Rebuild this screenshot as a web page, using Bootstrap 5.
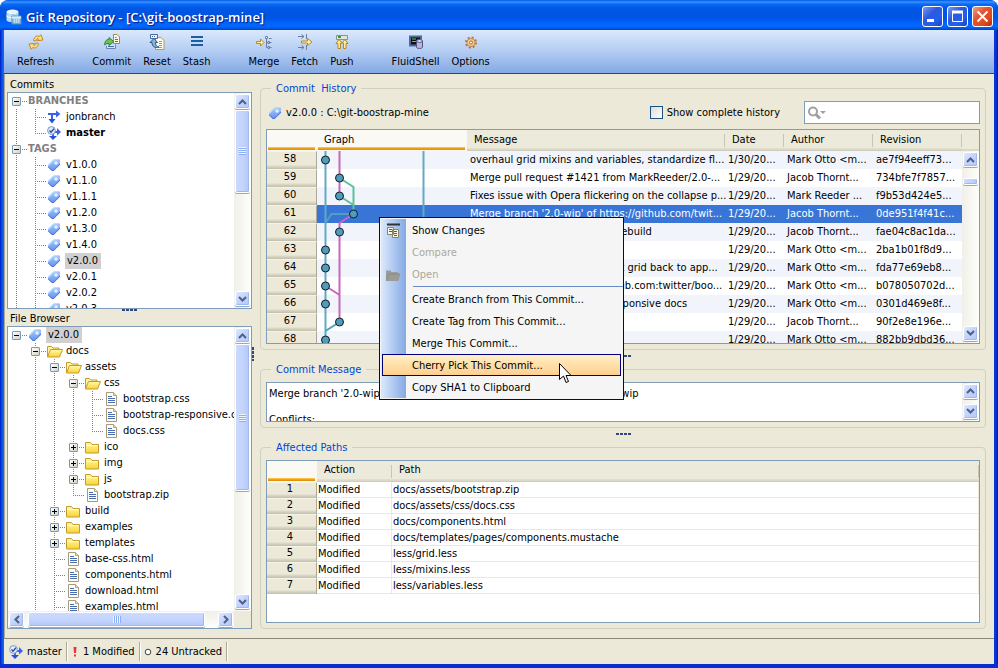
<!DOCTYPE html>
<html lang="en">
<head>
<meta charset="utf-8">
<meta name="viewport" content="width=device-width, initial-scale=1">
<title>Git Repository - [C:\git-boostrap-mine]</title>
<link href="https://cdn.jsdelivr.net/npm/bootstrap@5.3.0/dist/css/bootstrap.min.css" rel="stylesheet">
<style>
:root { --face: #ece9d8; --line: #7f9db9; --navy: #000080; }
body { font: 11px/16px "DejaVu Sans Condensed", "Noto Sans", sans-serif; color: #000; background: #fff; }
button { font: inherit; color: inherit; }
svg { flex: none; display: block; }
.app-window { height: 100vh; border-radius: 8px 8px 0 0; background: linear-gradient(90deg, #0019cf, #0855dd 2px, #166aee 4px, #0831d9 calc(100% - 4px), #0a3be4 calc(100% - 3px), #001ea0); padding: 0 4px 4px; box-shadow: inset 0 -4px 0 #0a2fd0; }
.title-bar { height: 30px; margin: 0 -4px; padding: 3px 5px 0 6px; border-radius: 8px 8px 0 0; background: linear-gradient(#0058e6 0, #3a93ff 2px, #0a6bf5 4px, #0058e6 8px, #0054e3 14px, #0055e5 18px, #0066ff 24px, #0066fb 27px, #0042c9 30px); }
.title-text { font: 600 13px/16px "Open Sans", "Noto Sans", sans-serif; color: #fff; text-shadow: 1px 1px 1px #0a1883; }
.win-btn { width: 21px; height: 21px; padding: 0; border: 1px solid #fff; border-radius: 3px; background: linear-gradient(135deg, #7b9bf0, #2b58de 40%, #2360ea 70%, #1941c5); }
.win-close { background: linear-gradient(135deg, #f0a088, #e2532f 40%, #e04a20 70%, #b82e0c); }
.tool-bar { height: 44px; padding: 0 7px; background: linear-gradient(#dbe9fd, #b7cff4 45%, #84a9e4); border-bottom: 1px solid #39399c; box-shadow: 0 1px 0 #aca899; gap: 26px; }
.tool-btn { padding: 4px 6px 0; border: 0; background: none; }
.tool-btn svg { margin: 0 auto 4px; }
.work-area { background: var(--face); border-left: 1px solid #aca899; border-bottom: 1px solid #8a8778; padding: 4px 8px 9px 2px; }
.side-col { width: 245px; flex: none; }
.pane-label { line-height: 14px; padding-left: 3px; }
.pane { background: #fff; border: 1px solid var(--line); min-height: 0; }
.grow-commits { flex: 217 1 0; }
.grow-files { flex: 303 1 0; }
.main-col { padding-top: 3px; }
.grow-history { flex: 263 1 0; }
.grow-message { flex: 59 1 0; }
.grow-paths { flex: 183 1 0; }
.split-h { height: 3px; flex: none; }
.split-wide { height: 12px; }
.split-v { width: 8px; flex: none; }
.grip-h { width: 15px; height: 2px; background: repeating-linear-gradient(90deg, #33477c 0 3px, transparent 3px 4px); }
.grip-v { width: 2px; height: 14px; background: repeating-linear-gradient(#33477c 0 3px, transparent 3px 4px); }

.tree { list-style: none; margin: 0; padding: 0; overflow: hidden; flex: 1 1 0; min-width: 0; white-space: nowrap; }
.tree li { display: flex; align-items: center; height: 16px; line-height: 14px; }
.gd { width: 19px; height: 16px; flex: none; display: flex; padding-left: 4px; align-items: center; }
.gd-v, .gd-t { background: repeating-linear-gradient(#808080 0 1px, transparent 1px 2px) 8px 0 / 1px 16px no-repeat; }
.gd-t { background: repeating-linear-gradient(#808080 0 1px, transparent 1px 2px) 8px 0 / 1px 16px no-repeat, repeating-linear-gradient(90deg, #808080 0 1px, transparent 1px 2px) 8px 8px / 11px 1px no-repeat; }
.gd-l { background: repeating-linear-gradient(#808080 0 1px, transparent 1px 2px) 8px 0 / 1px 9px no-repeat, repeating-linear-gradient(90deg, #808080 0 1px, transparent 1px 2px) 8px 8px / 11px 1px no-repeat; }
.gd-r { background: repeating-linear-gradient(90deg, #808080 0 1px, transparent 1px 2px) 8px 8px / 11px 1px no-repeat; }
.twist { width: 9px; height: 9px; padding: 0; border: 1px solid #7898b5; border-radius: 1px; background: linear-gradient(#000, #000) 1px 3px / 5px 1px no-repeat, linear-gradient(135deg, #fff, #d4d0c0); }
.twist-plus { background: linear-gradient(#000, #000) 1px 3px / 5px 1px no-repeat, linear-gradient(#000, #000) 3px 1px / 1px 5px no-repeat, linear-gradient(135deg, #fff, #d4d0c0); }
.ico-slot { width: 20px; flex: none; padding-left: 1px; }
.ico-slot .doc { margin-left: 2px; }
.tree-head { color: #808080; font-weight: bold; padding-left: 1px; }
.picked { background: #d0d0d0; line-height: 16px; padding: 0 3px 0 2px; margin-left: -1px; }

.sb { background: linear-gradient(90deg, #f0efe8, #fefefb); width: 17px; flex: none; padding: 1px 0 1px 1px; }
.sb-h { background: linear-gradient(#f0efe8, #fefefb); width: auto; height: 17px; flex: none; padding: 1px; }
.sb-btn, .sb-thumb { width: 15px; height: 15px; padding: 0; flex: none; border: 1px solid #fff; border-radius: 2px; box-shadow: inset -1px -1px 0 #a0b8ea, 0 1px 0 #8aa8dc; background: linear-gradient(135deg, #dfe8fe, #c3d3fd 50%, #b4c8f8); display: flex; align-items: center; justify-content: center; margin-bottom: 1px; }
.sb-thumb { background: linear-gradient(90deg, #cbdafe, #c1d2fd 60%, #b4c6f6); height: auto; }
.sb-h .sb-thumb { width: auto; height: 15px; background: linear-gradient(#cbdafe, #c1d2fd 60%, #b4c6f6); }
.sb-ridge { width: 7px; height: 8px; background: repeating-linear-gradient(#eef4fe 0 1px, #8cb0f8 1px 2px); }
.sb-h .sb-ridge { width: 8px; height: 7px; background: repeating-linear-gradient(90deg, #eef4fe 0 1px, #8cb0f8 1px 2px); }
.thumb-commits { flex: 78 1 0; } .rest-commits { flex: 94 1 0; }
.thumb-files { flex: 140 1 0; } .rest-files { flex: 98 1 0; }
.thumb-wide { flex: 178 1 0; } .rest-wide { flex: 9 1 0; }
.lead-history { flex: 10 1 0; } .rest-history { flex: 140 1 0; }
.thumb-history { height: 7px; }

.group-box { border: 1px solid #d0d0bf; border-radius: 4px; padding: 0 5px 5px; min-width: 0; min-height: 0; margin: 0; }
.group-box > legend { float: none; width: auto; margin: 0 0 0 5px; padding: 0 5px; font-size: 11px; line-height: 15px; color: #0046d5; }
.box-gap { margin-top: 5px; }
.history-bar { height: 23px; margin: 5px 0; flex: none; }
.repo-tag { margin: 0 4px 0 2px; }
.full-check { appearance: none; width: 13px; height: 13px; margin: 0; border: 1px solid #1c5180; background: linear-gradient(135deg, #dcdcd7, #fff); }
.find-box { width: 176px; border: 1px solid var(--line); background: #fff; padding: 0 3px; }
.find-box input { border: 0; outline: 0; min-width: 0; flex: 1; }

.grid { table-layout: fixed; width: 100%; border-collapse: separate; border-spacing: 0; }
.grid th, .grid td { padding: 0 0 0 3px; white-space: nowrap; }
.grid thead th { height: 21px; font-weight: normal; padding: 0 0 2px 7px; background: linear-gradient(#c9c5b2, #c9c5b2) right 4px / 1px 13px no-repeat, linear-gradient(#ebeadb 0 18px, #e2decd 18px 19px, #cbc7b8 21px); }
.grid thead .hot { background: linear-gradient(#ffcf5a, #f0a010 50%, #d88a0c) 1px 17px / calc(100% - 3px) 3px no-repeat, #faf9f4; }
.grid tbody th { font-weight: normal; text-align: center; padding: 0 3px 3px 0; background: linear-gradient(var(--face) 0 13px, #dedac8 14px, #c2beac 100%); border-right: 1px solid #aca899; border-top: 1px solid #f6f4ea; }
.hist td, .hist tbody th { height: 18px; line-height: 14px; }
.hist tr:nth-child(odd) td { background: #f1f5fb; }
.hist tr.active-row td { background: #3875d7; color: #fff; }
.hist thead th { line-height: 18px; }
.paths td, .paths tbody th { height: 16px; line-height: 12px; }
.paths tbody th { background: linear-gradient(var(--face) 0 11px, #dedac8 12px, #c2beac 100%); }
.paths td { border-bottom: 1px solid #ece9d8; border-right: 1px solid #ece9d8; padding-left: 1px; line-height: 15px; }
.w-num { width: 50px; } .w-graph { width: 150px; } .w-date { width: 59px; } .w-person { width: 89px; } .w-act { width: 75px; }
.graph-layer { left: 50px; top: 21px; pointer-events: none; }
.sb-cap { height: 21px; background: linear-gradient(#ebeadb 0 19px, #dcd8c8 19px); flex: none; }
.msg-text { border: 0; outline: 0; resize: none; overflow: hidden; padding: 4px 2px 0; line-height: 13px; min-width: 0; flex: 1; }

.status-bar { height: 25px; background: var(--face); padding: 0 5px; flex: none; }
.status-cell { border-right: 1px solid #aca899; box-shadow: 1px 0 0 #fff; height: 19px; padding: 0 4px; }

.ctx-menu { left: 379px; top: 217px; width: 245px; border: 1px solid var(--navy); background: linear-gradient(90deg, #dbe9fd, #84a9e4) 1px 1px / 25px calc(100% - 2px) no-repeat, #f5f5f5; padding: 1px 2px; z-index: 5; }
.ctx-menu button { display: flex; align-items: center; width: 100%; height: 22px; padding: 2px 0 0; border: 1px solid transparent; background: none; }
.ctx-menu button:disabled { color: #aca899; }
.ctx-menu .ctx-hot { border-color: var(--navy); background: linear-gradient(#fff0c8, #ffcf8c); }
.ctx-ico { width: 29px; flex: none; padding-left: 2px; }
.ctx-line { height: 1px; margin: 1px -2px 1px 31px; background: #6a8ccb; }
.pointer { left: 559px; top: 363px; z-index: 6; pointer-events: none; }
</style>
<script src="https://cdn.jsdelivr.net/npm/bootstrap@5.3.0/dist/js/bootstrap.bundle.min.js" defer></script>
</head>
<body>
<svg width="0" height="0" class="position-absolute" aria-hidden="true">
  <defs>
    <linearGradient id="gFold" x1="0" y1="0" x2="0" y2="1"><stop offset="0" stop-color="#fffab0"/><stop offset="1" stop-color="#f8d230"/></linearGradient>
    <linearGradient id="gTag" x1="0" y1="0" x2="0" y2="1"><stop offset="0" stop-color="#a8ccff"/><stop offset="1" stop-color="#6590f0"/></linearGradient>
  </defs>
  <symbol id="i-tag" viewBox="0 0 14 14"><path d="M1 7 6.500 1.500 12 1 13 2v4.500L6.500 13H5L1 9z" fill="url(#gTag)"/><path d="M1 7 6.500 1.500 12 1 12.500 1.500 7 2.500 1.500 8z" fill="#b9e0ff"/><path d="M1 8.500 5 12h1.500L13 5.500v1.200L6.500 13H5L1 9.300z" fill="#4a72d8"/><path d="M9 3v4M7 5h4" stroke="#fff"/></symbol>
  <symbol id="i-branch" viewBox="0 0 14 14"><path d="M1 4h9M5 4v6" stroke="#3a62e8" stroke-width="2" fill="none"/><path d="M9 .5 13.500 4 9 7.500z" fill="#3a62e8"/><path d="M1.500 9h7L5 13.500z" fill="#2850e0"/></symbol>
  <symbol id="i-head" viewBox="0 0 14 14"><path d="M8 6h3M6 7v4" stroke="#3a62e8" stroke-width="2"/><path d="M10 2 14 6 10 9.500z" fill="#3a62e8"/><path d="M2 10h8l-4 4z" fill="#2850e0"/><circle cx="4.500" cy="4.500" r="3.900" fill="#dfe9fb" stroke="#7a98cf"/><path d="M2.500 4.500 4 6.200 7 2.800" stroke="#284a9a" stroke-width="1.300" fill="none"/></symbol>
  <symbol id="i-open" viewBox="0 0 16 13"><path d="M.5 11.500V1.500h4l1.500 1.500h6v2.500" fill="#fff6a0" stroke="#c79a2c"/><path d="M.5 12 3.500 4.500H15.500L12.500 12z" fill="url(#gFold)" stroke="#c79a2c"/></symbol>
  <symbol id="i-fold" viewBox="0 0 16 13"><path d="M.5 11.500v-10h5l1.500 2h6.500v8.500H.5z" fill="url(#gFold)" stroke="#c79a2c"/><path d="M1.500 4.500h11" stroke="#fffde0"/></symbol>
  <symbol id="i-doc" viewBox="0 0 12 14"><path d="M.5.5h7l3 3v10H.5z" fill="#fdfdf4" stroke="#a89a78"/><path d="M7.500.5v3h3" fill="#e6dcae" stroke="#b8a870"/><path d="M2 4.500h4M2 6.500h7M2 8.500h7M2 10.500h7" stroke="#4a6db0"/></symbol>
  <symbol id="c-up" viewBox="0 0 9 6"><path d="M1 5 4.500 1.500 8 5" fill="none" stroke="#4d6185" stroke-width="2"/></symbol>
  <symbol id="c-down" viewBox="0 0 9 6"><path d="M1 1 4.500 4.500 8 1" fill="none" stroke="#4d6185" stroke-width="2"/></symbol>
  <symbol id="c-left" viewBox="0 0 6 9"><path d="M5 1 1.500 4.500 5 8" fill="none" stroke="#4d6185" stroke-width="2"/></symbol>
  <symbol id="c-right" viewBox="0 0 6 9"><path d="M1 1 4.500 4.500 1 8" fill="none" stroke="#4d6185" stroke-width="2"/></symbol>
</svg>

<div class="app-window d-flex flex-column overflow-hidden position-relative">
  <header class="title-bar d-flex align-items-center">
    <svg width="16" height="16" viewBox="0 0 16 16"><ellipse cx="6.500" cy="3" rx="6" ry="2.500" fill="#e6f4fb"/><path d="M.5 3v8c0 3 12 3 12 0V3c0 3-12 3-12 0z" fill="#b9def0"/><path d="M.5 7c2 2 6 2 8 1" stroke="#fff" fill="none"/><path d="M6 7h9v8H6z" fill="#8fc4e0" stroke="#4f8fc0"/><path d="M6 8.500h9" stroke="#d9effa" stroke-width="2"/><path d="M8 11h6M8 13h6" stroke="#e8f6fc" stroke-dasharray="1 1"/></svg>
    <h1 class="title-text m-0 ms-1 flex-grow-1">Git Repository - [C:\git-boostrap-mine]</h1>
    <div class="d-flex gap-1">
      <button class="win-btn" aria-label="Minimize"><svg width="19" height="19"><path d="M4 13.500h7" stroke="#fff" stroke-width="3"/></svg></button>
      <button class="win-btn" aria-label="Maximize"><svg width="19" height="19"><path d="M4.500 5v9.500h10V5" stroke="#fff" fill="none"/><path d="M4 5h11" stroke="#fff" stroke-width="3"/></svg></button>
      <button class="win-btn win-close" aria-label="Close"><svg width="19" height="19"><path d="m4.500 4.500 10 10m0-10-10 10" stroke="#fff" stroke-width="2"/></svg></button>
    </div>
  </header>

  <nav class="tool-bar d-flex flex-shrink-0 align-items-start" aria-label="Tools">
    <div class="d-flex">
      <button class="tool-btn"><svg width="16" height="16" viewBox="0 0 16 16"><path d="M5.500 6.500C6 3 8.500 1 11 2.500L13 .8l2 5.200-5.500.7 1-1.700C9.500 4 8.500 4.500 8 7z" fill="#ffdc80" stroke="#c08a2a"/><path d="M10.500 9.500C10 13 7.500 15 5 13.500L3 15.200 1 10l5.500-.7-1 1.700C6.500 12 7.500 11.500 8 9z" fill="#ffdc80" stroke="#c08a2a"/></svg>Refresh</button>
    </div>
    <div class="d-flex">
      <button class="tool-btn"><svg width="16" height="16" viewBox="0 0 16 16"><path d="M9.500.5h3.500l2.500 2.500v6.500h-6z" fill="#fdfbe8" stroke="#a08a4a"/><path d="M11 3.500h1.500M11 5.500h3M11 7.500h3" stroke="#4a6db0"/><path d="M2.500 12v2.500h9V10.500" fill="#d8e4f6" stroke="#6a86b4"/><path d="M4 12.500h6" stroke="#4a6db0"/><path d="M.8 11C.6 7 2.500 5.500 5 5.500V3.500L9.500 7.500 5 11.500V9.500C3.500 9.200 2 9.500.8 11z" fill="#6cc458" stroke="#2f7f2c"/></svg>Commit</button>
      <button class="tool-btn"><svg width="16" height="16" viewBox="0 0 16 16"><path d="M6.500 3.500h5.500l3 3v9h-8.500z" fill="#fdfbe8" stroke="#b09a58"/><path d="M10 7.500h3M10 9.500h3M10 11.500h3M9 13.500h4" stroke="#8a9cc0"/><path d="M1.500.500h7v4h-7z" fill="#eef4fc" stroke="#4a6a9a"/><path d="M3 2.500h4" stroke="#3a62a0" stroke-dasharray="1 1"/><path d="M5 4.500 8.500 8.500H6.500c-.2 3 1.500 4 3.500 4.500-4 1.500-7-.5-7-4.500H1z" fill="#8ab4d6" stroke="#2c5a8a"/></svg>Reset</button>
      <button class="tool-btn"><svg width="16" height="16" viewBox="0 0 16 16"><path d="M2 3h12M2 7h12M2 11h12" stroke="#1c5f9f" stroke-width="2"/></svg>Stash</button>
    </div>
    <div class="d-flex">
      <button class="tool-btn"><svg width="16" height="16" viewBox="0 0 16 16"><path d="M.5 7.500h4V5L8 8.500 4.500 12V9.500h-4z" fill="#fff0a0" stroke="#b88a20"/><path d="M10.500 4v9.500h2M10.500 8.500h2M13 4.500h2.500M13.500 8.500h2M13.500 13.500h2" stroke="#6880a8" fill="none"/><path d="M9.500 2.500h2v2h-2zM12 7.500h1.500v2H12zM12 12.500h1.500v2H12z" fill="#fff" stroke="#6880a8"/></svg>Merge</button>
      <button class="tool-btn"><svg width="16" height="16" viewBox="0 0 16 16"><path d="M1 2.500h6M4.500.5l2.500 2-2.500 2M9.500 0v5M1 13.500h6M4.500 11.500l2.500 2-2.500 2M9.500 11v5" stroke="#6a7c98" fill="none"/><path d="M4.500 7h6V4.500L15 8l-4.500 3.500V9h-6z" fill="#fff0a0" stroke="#b88a20"/></svg>Fetch</button>
      <button class="tool-btn"><svg width="16" height="16" viewBox="0 0 16 16"><path d="M2.500 1.500h11v4h-11z" fill="#dfe6dc" stroke="#8a9484"/><path d="M4 3h3" stroke="#3a9a3a" stroke-width="2"/><path d="M4 14.500V9.500H2L5 5.500 8 9H6.500v5.500zM9.500 14.500V9H8l3-3.500 3 4h-2v5z" fill="#fff0a0" stroke="#b8861c"/></svg>Push</button>
    </div>
    <div class="d-flex">
      <button class="tool-btn"><svg width="16" height="16" viewBox="0 0 16 16"><path d="M2 2.500h11v9H2z" fill="#111" stroke="#4a6a9c" stroke-width="2"/><path d="M4 5h4M4 7.500h5" stroke="#58d058"/><path d="M8.500 7v6c0 2 6 2 6 0V7z" fill="#b4b8dc" stroke="#50547c"/><ellipse cx="11.500" cy="7" rx="3" ry="1.400" fill="#e6e8f6" stroke="#50547c"/></svg>FluidShell</button>
      <button class="tool-btn"><svg width="16" height="16" viewBox="0 0 16 16"><circle cx="8" cy="8.500" r="5" fill="none" stroke="#b4783c" stroke-width="2" stroke-dasharray="2 1.930"/><circle cx="8" cy="8.500" r="4" fill="#f4cc90" stroke="#c08a50"/><circle cx="8" cy="8.500" r="1.500" fill="#fff" stroke="#a06830"/></svg>Options</button>
    </div>
  </nav>

  <main class="work-area d-flex flex-grow-1 overflow-hidden">
    <div class="side-col d-flex flex-column">
      <div class="pane-label">Commits</div>
      <div class="pane grow-commits d-flex">
        <ul class="tree">
          <li><span class="gd gd-r"><button class="twist" aria-label="Collapse"></button></span><span class="tree-head">BRANCHES</span></li>
          <li><span class="gd gd-v"></span><span class="gd gd-t"></span><span class="ico-slot"><svg width="14" height="14"><use href="#i-branch"/></svg></span>jonbranch</li>
          <li><span class="gd gd-v"></span><span class="gd gd-l"></span><span class="ico-slot"><svg width="14" height="14"><use href="#i-head"/></svg></span><b>master</b></li>
          <li><span class="gd gd-t"><button class="twist" aria-label="Collapse"></button></span><span class="tree-head">TAGS</span></li>
          <li><span class="gd gd-v"></span><span class="gd gd-t"></span><span class="ico-slot"><svg width="14" height="14"><use href="#i-tag"/></svg></span>v1.0.0</li>
          <li><span class="gd gd-v"></span><span class="gd gd-t"></span><span class="ico-slot"><svg width="14" height="14"><use href="#i-tag"/></svg></span>v1.1.0</li>
          <li><span class="gd gd-v"></span><span class="gd gd-t"></span><span class="ico-slot"><svg width="14" height="14"><use href="#i-tag"/></svg></span>v1.1.1</li>
          <li><span class="gd gd-v"></span><span class="gd gd-t"></span><span class="ico-slot"><svg width="14" height="14"><use href="#i-tag"/></svg></span>v1.2.0</li>
          <li><span class="gd gd-v"></span><span class="gd gd-t"></span><span class="ico-slot"><svg width="14" height="14"><use href="#i-tag"/></svg></span>v1.3.0</li>
          <li><span class="gd gd-v"></span><span class="gd gd-t"></span><span class="ico-slot"><svg width="14" height="14"><use href="#i-tag"/></svg></span>v1.4.0</li>
          <li><span class="gd gd-v"></span><span class="gd gd-t"></span><span class="ico-slot"><svg width="14" height="14"><use href="#i-tag"/></svg></span><span class="picked">v2.0.0</span></li>
          <li><span class="gd gd-v"></span><span class="gd gd-t"></span><span class="ico-slot"><svg width="14" height="14"><use href="#i-tag"/></svg></span>v2.0.1</li>
          <li><span class="gd gd-v"></span><span class="gd gd-t"></span><span class="ico-slot"><svg width="14" height="14"><use href="#i-tag"/></svg></span>v2.0.2</li>
          <li><span class="gd gd-v"></span><span class="gd gd-t"></span><span class="ico-slot"><svg width="14" height="14"><use href="#i-tag"/></svg></span>v2.0.3</li>
        </ul>
        <div class="sb d-flex flex-column">
          <button class="sb-btn" aria-label="Scroll up"><svg width="9" height="6"><use href="#c-up"/></svg></button>
          <div class="sb-thumb thumb-commits"><span class="sb-ridge"></span></div>
          <div class="rest-commits"></div>
          <button class="sb-btn" aria-label="Scroll down"><svg width="9" height="6"><use href="#c-down"/></svg></button>
        </div>
      </div>
      <div class="split-h d-flex justify-content-center"><span class="grip-h"></span></div>
      <div class="pane-label">File Browser</div>
      <div class="pane grow-files d-flex flex-column">
        <div class="d-flex flex-grow-1 overflow-hidden">
          <ul class="tree">
            <li><span class="gd gd-r"><button class="twist" aria-label="Collapse"></button></span><span class="ico-slot"><svg width="14" height="14"><use href="#i-tag"/></svg></span><span class="picked">v2.0.0</span></li>
            <li><span class="gd"></span><span class="gd gd-t"><button class="twist" aria-label="Collapse"></button></span><span class="ico-slot"><svg width="16" height="13"><use href="#i-open"/></svg></span>docs</li>
            <li><span class="gd"></span><span class="gd gd-v"></span><span class="gd gd-t"><button class="twist" aria-label="Collapse"></button></span><span class="ico-slot"><svg width="16" height="13"><use href="#i-open"/></svg></span>assets</li>
            <li><span class="gd"></span><span class="gd gd-v"></span><span class="gd gd-v"></span><span class="gd gd-t"><button class="twist" aria-label="Collapse"></button></span><span class="ico-slot"><svg width="16" height="13"><use href="#i-open"/></svg></span>css</li>
            <li><span class="gd"></span><span class="gd gd-v"></span><span class="gd gd-v"></span><span class="gd gd-v"></span><span class="gd gd-t"></span><span class="ico-slot"><svg class="doc" width="12" height="14"><use href="#i-doc"/></svg></span>bootstrap.css</li>
            <li><span class="gd"></span><span class="gd gd-v"></span><span class="gd gd-v"></span><span class="gd gd-v"></span><span class="gd gd-t"></span><span class="ico-slot"><svg class="doc" width="12" height="14"><use href="#i-doc"/></svg></span>bootstrap-responsive.css</li>
            <li><span class="gd"></span><span class="gd gd-v"></span><span class="gd gd-v"></span><span class="gd gd-v"></span><span class="gd gd-l"></span><span class="ico-slot"><svg class="doc" width="12" height="14"><use href="#i-doc"/></svg></span>docs.css</li>
            <li><span class="gd"></span><span class="gd gd-v"></span><span class="gd gd-v"></span><span class="gd gd-t"><button class="twist twist-plus" aria-label="Expand"></button></span><span class="ico-slot"><svg width="16" height="13"><use href="#i-fold"/></svg></span>ico</li>
            <li><span class="gd"></span><span class="gd gd-v"></span><span class="gd gd-v"></span><span class="gd gd-t"><button class="twist twist-plus" aria-label="Expand"></button></span><span class="ico-slot"><svg width="16" height="13"><use href="#i-fold"/></svg></span>img</li>
            <li><span class="gd"></span><span class="gd gd-v"></span><span class="gd gd-v"></span><span class="gd gd-t"><button class="twist twist-plus" aria-label="Expand"></button></span><span class="ico-slot"><svg width="16" height="13"><use href="#i-fold"/></svg></span>js</li>
            <li><span class="gd"></span><span class="gd gd-v"></span><span class="gd gd-v"></span><span class="gd gd-l"></span><span class="ico-slot"><svg class="doc" width="12" height="14"><use href="#i-doc"/></svg></span>bootstrap.zip</li>
            <li><span class="gd"></span><span class="gd gd-v"></span><span class="gd gd-t"><button class="twist twist-plus" aria-label="Expand"></button></span><span class="ico-slot"><svg width="16" height="13"><use href="#i-fold"/></svg></span>build</li>
            <li><span class="gd"></span><span class="gd gd-v"></span><span class="gd gd-t"><button class="twist twist-plus" aria-label="Expand"></button></span><span class="ico-slot"><svg width="16" height="13"><use href="#i-fold"/></svg></span>examples</li>
            <li><span class="gd"></span><span class="gd gd-v"></span><span class="gd gd-t"><button class="twist twist-plus" aria-label="Expand"></button></span><span class="ico-slot"><svg width="16" height="13"><use href="#i-fold"/></svg></span>templates</li>
            <li><span class="gd"></span><span class="gd gd-v"></span><span class="gd gd-t"></span><span class="ico-slot"><svg class="doc" width="12" height="14"><use href="#i-doc"/></svg></span>base-css.html</li>
            <li><span class="gd"></span><span class="gd gd-v"></span><span class="gd gd-t"></span><span class="ico-slot"><svg class="doc" width="12" height="14"><use href="#i-doc"/></svg></span>components.html</li>
            <li><span class="gd"></span><span class="gd gd-v"></span><span class="gd gd-t"></span><span class="ico-slot"><svg class="doc" width="12" height="14"><use href="#i-doc"/></svg></span>download.html</li>
            <li><span class="gd"></span><span class="gd gd-v"></span><span class="gd gd-t"></span><span class="ico-slot"><svg class="doc" width="12" height="14"><use href="#i-doc"/></svg></span>examples.html</li>
          </ul>
          <div class="sb d-flex flex-column">
            <button class="sb-btn" aria-label="Scroll up"><svg width="9" height="6"><use href="#c-up"/></svg></button>
            <div class="sb-thumb thumb-files"><span class="sb-ridge"></span></div>
            <div class="rest-files"></div>
            <button class="sb-btn" aria-label="Scroll down"><svg width="9" height="6"><use href="#c-down"/></svg></button>
          </div>
        </div>
        <div class="d-flex">
          <div class="sb sb-h d-flex flex-grow-1">
            <button class="sb-btn" aria-label="Scroll left"><svg width="6" height="9"><use href="#c-left"/></svg></button>
            <div class="sb-thumb thumb-wide mx-1"><span class="sb-ridge"></span></div>
            <div class="rest-wide"></div>
            <button class="sb-btn" aria-label="Scroll right"><svg width="6" height="9"><use href="#c-right"/></svg></button>
          </div>
          <div class="sb-cap sb h-auto"></div>
        </div>
      </div>
    </div>

    <div class="split-v d-flex align-items-center"><span class="grip-v"></span></div>

    <div class="main-col d-flex flex-column flex-fill overflow-hidden">
      <fieldset class="group-box grow-history d-flex flex-column">
        <legend>Commit&nbsp; History</legend>
        <div class="history-bar d-flex align-items-center">
          <svg width="14" height="14" class="repo-tag"><use href="#i-tag"/></svg>
          <span class="flex-grow-1">v2.0.0 : C:\git-boostrap-mine</span>
          <label class="d-flex align-items-center gap-1 me-4" for="full"><input type="checkbox" class="full-check" id="full">Show complete history</label>
          <div class="find-box d-flex align-items-center h-100">
            <svg width="18" height="14" viewBox="0 0 18 14"><circle cx="5" cy="5.500" r="4" fill="none" stroke="#a0a0a0" stroke-width="2"/><path d="m8 8.500 4 4" stroke="#a0a0a0" stroke-width="3"/><path d="M12 5h6l-3 3z" fill="#a0a0a0"/></svg>
            <input type="text" aria-label="Search commits">
          </div>
        </div>
        <div class="pane flex-fill d-flex overflow-hidden position-relative">
          <div class="flex-fill overflow-hidden">
            <table class="grid hist">
              <colgroup><col class="w-num"><col class="w-graph"><col><col class="w-date"><col class="w-person"><col class="w-person"></colgroup>
              <thead><tr><th class="hot" aria-label="Row"></th><th class="hot">Graph</th><th>Message</th><th>Date</th><th>Author</th><th>Revision</th></tr></thead>
              <tbody>
                <tr><th>58</th><td></td><td>overhaul grid mixins and variables, standardize fl...</td><td>1/30/20...</td><td>Mark Otto &lt;m...</td><td>ae7f94eeff73...</td></tr>
                <tr><th>59</th><td></td><td>Merge pull request #1421 from MarkReeder/2.0-...</td><td>1/29/20...</td><td>Jacob Thornt...</td><td>734bfe7f7857...</td></tr>
                <tr><th>60</th><td></td><td>Fixes issue with Opera flickering on the collapse p...</td><td>1/29/20...</td><td>Mark Reeder ...</td><td>f9b53d424e5...</td></tr>
                <tr class="active-row"><th>61</th><td></td><td>Merge branch '2.0-wip' of https://github.com/twit...</td><td>1/29/20...</td><td>Jacob Thornt...</td><td>0de951f4f41c...</td></tr>
                <tr><th>62</th><td></td><td>fix forms markup in docs and rebuild</td><td>1/29/20...</td><td>Jacob Thornt...</td><td>fae04c8ac1da...</td></tr>
                <tr><th>63</th><td></td><td>update docs</td><td>1/29/20...</td><td>Mark Otto &lt;m...</td><td>2ba1b01f8d9...</td></tr>
                <tr><th>64</th><td></td><td>add nesting, and revert default grid back to app...</td><td>1/29/20...</td><td>Mark Otto &lt;m...</td><td>fda77e69eb8...</td></tr>
                <tr><th>65</th><td></td><td>Merge branch '2.0-wip' of github.com:twitter/boo...</td><td>1/29/20...</td><td>Mark Otto &lt;m...</td><td>b078050702d...</td></tr>
                <tr><th>66</th><td></td><td>add more examples for the responsive docs</td><td>1/29/20...</td><td>Mark Otto &lt;m...</td><td>0301d469e8f...</td></tr>
                <tr><th>67</th><td></td><td>fix up tests</td><td>1/29/20...</td><td>Jacob Thornt...</td><td>90f2e8e196e...</td></tr>
                <tr><th>68</th><td></td><td>update grid</td><td>1/29/20...</td><td>Mark Otto &lt;m...</td><td>882bb9dbd36...</td></tr>
              </tbody>
            </table>
          </div>
          <svg class="graph-layer position-absolute" width="150" height="198" aria-label="Branch graph">
            <g fill="none" stroke-width="2">
              <path d="M8.500 0v198M106.500 0v198" stroke="#62a9c4"/>
              <path d="M22.500 0v45M36.500 63l-14 9v99M8.500 135l14 9" stroke="#c866bc"/>
              <path d="M22.500 27l14 9v27M22.500 45l14 9" stroke="#5cc09c"/>
              <path d="M8.500 72l6-9h22M22.500 171l-14 9" stroke="#4f9fbe"/>
            </g>
            <g fill="#4f9dba" stroke="#111c24">
              <circle cx="8.500" cy="9" r="4"/><circle cx="22.500" cy="27" r="4"/><circle cx="22.500" cy="45" r="4"/><circle cx="36.500" cy="63" r="4"/><circle cx="22.500" cy="81" r="4"/><circle cx="8.500" cy="99" r="4"/><circle cx="8.500" cy="117" r="4"/><circle cx="8.500" cy="135" r="4"/><circle cx="8.500" cy="153" r="4"/><circle cx="22.500" cy="171" r="4"/><circle cx="8.500" cy="189" r="4"/>
            </g>
          </svg>
          <div class="d-flex flex-column flex-shrink-0">
            <div class="sb-cap"></div>
            <div class="sb d-flex flex-column flex-fill">
              <button class="sb-btn" aria-label="Scroll up"><svg width="9" height="6"><use href="#c-up"/></svg></button>
              <div class="lead-history"></div>
              <div class="sb-thumb thumb-history"></div>
              <div class="rest-history"></div>
              <button class="sb-btn" aria-label="Scroll down"><svg width="9" height="6"><use href="#c-down"/></svg></button>
            </div>
          </div>
        </div>
      </fieldset>

      <div class="split-h split-wide d-flex justify-content-center align-items-center"><span class="grip-h"></span></div>

      <fieldset class="group-box grow-message d-flex flex-column">
        <legend>Commit Message</legend>
        <div class="pane box-gap flex-fill d-flex overflow-hidden">
          <textarea class="msg-text" readonly rows="1" aria-label="Commit message">Merge branch '2.0-wip' of https://github.com/twitter/bootstrap into 2.0-wip

Conflicts:</textarea>
          <div class="sb d-flex flex-column justify-content-between">
            <button class="sb-btn" aria-label="Scroll up"><svg width="9" height="6"><use href="#c-up"/></svg></button>
            <button class="sb-btn" aria-label="Scroll down"><svg width="9" height="6"><use href="#c-down"/></svg></button>
          </div>
        </div>
      </fieldset>

      <div class="split-h split-wide d-flex justify-content-center align-items-center"><span class="grip-h"></span></div>

      <fieldset class="group-box grow-paths d-flex flex-column">
        <legend>Affected Paths</legend>
        <div class="pane box-gap flex-fill overflow-hidden">
          <table class="grid paths">
            <colgroup><col class="w-num"><col class="w-act"><col></colgroup>
            <thead><tr><th class="hot" aria-label="Row"></th><th>Action</th><th>Path</th></tr></thead>
            <tbody>
              <tr><th>1</th><td>Modified</td><td>docs/assets/bootstrap.zip</td></tr>
              <tr><th>2</th><td>Modified</td><td>docs/assets/css/docs.css</td></tr>
              <tr><th>3</th><td>Modified</td><td>docs/components.html</td></tr>
              <tr><th>4</th><td>Modified</td><td>docs/templates/pages/components.mustache</td></tr>
              <tr><th>5</th><td>Modified</td><td>less/grid.less</td></tr>
              <tr><th>6</th><td>Modified</td><td>less/mixins.less</td></tr>
              <tr><th>7</th><td>Modified</td><td>less/variables.less</td></tr>
            </tbody>
          </table>
        </div>
      </fieldset>
    </div>
  </main>

  <footer class="status-bar d-flex align-items-center">
    <div class="status-cell ps-0 d-flex align-items-center gap-1"><svg width="14" height="14"><use href="#i-head"/></svg>master</div>
    <div class="status-cell d-flex align-items-center gap-1"><svg width="8" height="12" viewBox="0 0 8 12"><path d="M2.500 1h3L5 7H3z" fill="#f0303c"/><path d="M3 8.500h2v2H3z" fill="#f0303c"/></svg>1 Modified</div>
    <div class="status-cell d-flex align-items-center gap-1"><svg width="8" height="8" viewBox="0 0 8 8"><circle cx="4" cy="4" r="2.800" fill="#fff" stroke="#444"/></svg>24 Untracked</div>
  </footer>

  <div class="ctx-menu position-absolute" role="menu">
    <button role="menuitem"><span class="ctx-ico"><svg width="16" height="16" viewBox="0 0 16 16"><path d="M2 1.500h13" stroke="#333" stroke-width="2"/><path d="M2.500 4.500h6v7h-6zM7.500 6.500h6v8h-6z" fill="#fdfbe8" stroke="#8a8468"/><path d="M4 6.500h3M4 8.500h3M9 8.500h3M9 10.500h3M9 12.500h3" stroke="#3a5a94"/></svg></span>Show Changes</button>
    <button role="menuitem" disabled><span class="ctx-ico"></span>Compare</button>
    <button role="menuitem" disabled><span class="ctx-ico"><svg width="16" height="13" viewBox="0 0 16 13"><path d="M1 11.500V1.500h4.500l1 1.500H13v2h2.500l-2 7H1z" fill="#9b9b98"/><path d="M1.500 11.500 3.500 5h11.500" stroke="#8a8a88" fill="none"/></svg></span>Open</button>
    <div class="ctx-line" role="separator"></div>
    <button role="menuitem"><span class="ctx-ico"></span>Create Branch from This Commit...</button>
    <button role="menuitem"><span class="ctx-ico"></span>Create Tag from This Commit...</button>
    <button role="menuitem"><span class="ctx-ico"></span>Merge This Commit...</button>
    <button role="menuitem" class="ctx-hot"><span class="ctx-ico"></span>Cherry Pick This Commit...</button>
    <button role="menuitem"><span class="ctx-ico"></span>Copy SHA1 to Clipboard</button>
  </div>
  <svg class="pointer position-absolute" width="12" height="21" viewBox="0 0 12 21"><path d="M.5.500v16l4-3.500 2.500 6.500 2.500-1-2.500-6h5z" fill="#fff" stroke="#000"/></svg>
</div>
</body>
</html>
